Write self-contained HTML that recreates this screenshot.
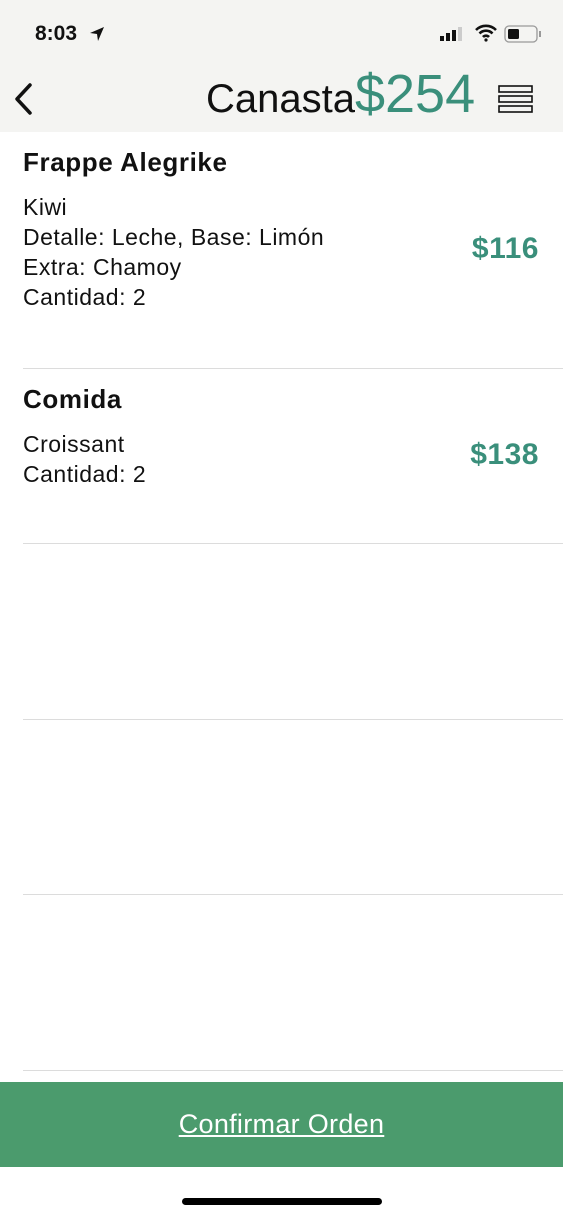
<!DOCTYPE html>
<html><head><meta charset="utf-8"><style>
*{margin:0;padding:0;box-sizing:border-box}
body{width:563px;height:1218px;background:#fff;font-family:"Liberation Sans",sans-serif;position:relative;overflow:hidden;color:#111}
.hdr{position:absolute;left:0;top:0;width:563px;height:132px;background:#f4f4f2}
.abs{position:absolute;white-space:nowrap}
.sep{position:absolute;left:23px;right:0;height:1px;background:#dcdcdc}
.t{font-size:26px;font-weight:bold;letter-spacing:0.6px}
.d{font-size:23px;line-height:30px;letter-spacing:0.5px}
.p{font-size:30px;font-weight:bold;color:#3a8f7b;right:24px;letter-spacing:0.5px}
</style></head><body>
<div class="hdr"></div>
<div class="abs" style="left:35px;top:22px;font-size:21px;font-weight:bold">8:03</div>
<svg class="abs" style="left:89px;top:26px" width="16" height="16" viewBox="0 0 16 16"><path d="M15 1L1 7l7 1 1 7z" fill="#111"/></svg>
<svg class="abs" style="left:440px;top:26px" width="26" height="16"><rect x="0" y="10" width="4" height="5" fill="#111"/><rect x="6" y="7" width="4" height="8" fill="#111"/><rect x="12" y="4" width="4" height="11" fill="#111"/><rect x="18" y="1" width="4" height="14" fill="#ccc"/></svg>
<svg class="abs" style="left:474px;top:24px" width="24" height="18" viewBox="0 0 24 18"><path d="M2 6a14 14 0 0 1 20 0M5.5 9.5a9 9 0 0 1 13 0M9 13a4 4 0 0 1 6 0" stroke="#111" stroke-width="2.6" fill="none"/><circle cx="12" cy="16" r="1.6" fill="#111"/></svg>
<svg class="abs" style="left:504px;top:25px" width="38" height="18"><rect x="1" y="1" width="32" height="16" rx="4" fill="none" stroke="#999" stroke-width="1.3"/><rect x="4" y="4" width="11" height="10" rx="1.5" fill="#111"/><rect x="35" y="6" width="2" height="6" fill="#999"/></svg>
<svg class="abs" style="left:11px;top:82px" width="24" height="34"><path d="M19 3L6 17l13 14" stroke="#111" stroke-width="3.5" fill="none" stroke-linecap="round" stroke-linejoin="round"/></svg>
<div class="abs" style="left:206px;top:66px;font-size:40px;line-height:56px">Canasta<span style="color:#3a8f7b;font-size:54px">$254</span></div>
<svg class="abs" style="left:498px;top:84px" width="36" height="30"><g fill="none" stroke="#111" stroke-width="1.6"><rect x="1" y="2" width="33" height="6"/><rect x="1" y="12" width="33" height="6"/><rect x="1" y="22" width="33" height="6"/></g></svg>

<div class="abs t" style="left:23px;top:147px">Frappe Alegrike</div>
<div class="abs d" style="left:23px;top:192px">Kiwi<br>Detalle: Leche, Base: Limón<br>Extra: Chamoy<br>Cantidad: 2</div>
<div class="abs p" style="top:232px">$116</div>
<div class="sep" style="top:368px"></div>
<div class="abs t" style="left:23px;top:384px">Comida</div>
<div class="abs d" style="left:23px;top:429px">Croissant<br>Cantidad: 2</div>
<div class="abs p" style="top:438px">$138</div>
<div class="sep" style="top:543px"></div>
<div class="sep" style="top:719px"></div>
<div class="sep" style="top:894px"></div>
<div class="sep" style="top:1070px"></div>
<div class="abs" style="left:0;top:1082px;width:563px;height:85px;background:#4b9b6d;color:#fff;font-size:27px;letter-spacing:0.3px;text-align:center;line-height:85px;text-decoration:underline">Confirmar Orden</div>
<div class="abs" style="left:182px;top:1198px;width:200px;height:7px;border-radius:4px;background:#000"></div>
</body></html>
